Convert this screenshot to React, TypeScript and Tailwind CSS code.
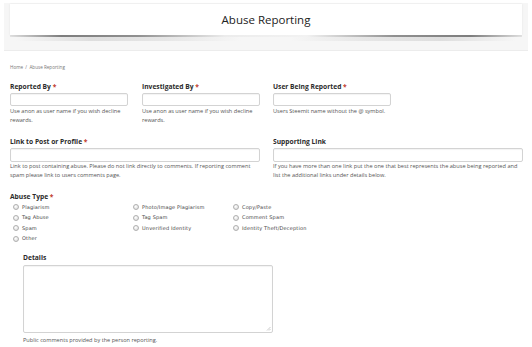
import React from "react";

const Req = () => <span className="text-[#c0392b]"> *</span>;

function Label({ children, req }: { children: React.ReactNode; req?: boolean }) {
  return (
    <div className="h-[10px] text-[6.7px] leading-[10px] font-bold text-[#2b2b2b]">
      {children}
      {req && <Req />}
    </div>
  );
}

function Input({ w, h = 13 }: { w?: string; h?: number }) {
  return (
    <div
      className={`mt-[1px] border border-[#d3d3d3] rounded-[2px] bg-white shadow-[inset_0_1px_1px_rgba(0,0,0,0.05)] ${w ?? "w-full"}`}
      style={{ height: h }}
    />
  );
}

function Help({ children }: { children: React.ReactNode }) {
  return <div className="text-[5.6px] leading-[9px] text-[#555] pt-[0.5px]">{children}</div>;
}

function Radio({ label }: { label: string }) {
  return (
    <div className="flex items-center h-[10.5px]">
      <span className="w-[6px] h-[6px] rounded-full border border-[#b0b0b0] bg-[radial-gradient(circle_at_40%_35%,#ffffff,#d6d6d6)] shrink-0" />
      <span className="ml-[3px] text-[5px] tracking-[0.15px] text-[#444] font-['DejaVu_Sans',sans-serif]">{label}</span>
    </div>
  );
}

export default function App() {
  return (
    <div className="w-[532px] h-[347px] bg-white overflow-hidden font-['Open_Sans',sans-serif]">
      {/* header */}
      <div className="pt-[3px] px-[4px]">
        <div className="h-[48px] bg-[#f6f6f6] pt-[1px] px-[6px] border-b border-[#ececec]">
          <div className="h-[31px] bg-white flex items-center justify-center text-[11.5px] text-[#222] shadow-[0_0_2px_rgba(0,0,0,0.08)]">
            Abuse Reporting
          </div>
          <div className="h-[2px] bg-[linear-gradient(to_right,rgba(0,0,0,0.08)_0%,#7d7d7d_10%,#909090_25%,#ececec_42%,#f2f2f2_58%,#909090_75%,#7d7d7d_90%,rgba(0,0,0,0.08)_100%)]" />
          <div className="h-[4px] bg-[linear-gradient(to_right,transparent_0%,#dedede_15%,#e6e6e6_30%,#f6f6f6_45%,#f6f6f6_55%,#e6e6e6_70%,#dedede_85%,transparent_100%)] mx-[6px]" />
        </div>
      </div>

      <div className="pl-[10px] pr-[9px]">
        {/* breadcrumb */}
        <div className="mt-[12px] h-[8px] text-[4.6px] leading-[8px] text-[#777]">
          Home&nbsp;&nbsp;/&nbsp;&nbsp;Abuse Reporting
        </div>

        {/* row 1 */}
        <div className="mt-[11px] grid grid-cols-[250px_250px] gap-x-[13px]">
          <div className="grid grid-cols-[118px_118px] gap-x-[14px]">
            <div>
              <Label req>Reported By</Label>
              <Input />
              <Help>
                Use anon as user name if you wish decline
                <br />
                rewards.
              </Help>
            </div>
            <div>
              <Label req>Investigated By</Label>
              <Input />
              <Help>
                Use anon as user name if you wish decline
                <br />
                rewards.
              </Help>
            </div>
          </div>
          <div>
            <Label req>User Being Reported</Label>
            <Input w="w-[118px]" />
            <Help>Users Steemit name without the @ symbol.</Help>
          </div>
        </div>

        {/* row 2 */}
        <div className="mt-[12px] grid grid-cols-[250px_250px] gap-x-[13px]">
          <div>
            <Label req>Link to Post or Profile</Label>
            <Input h={14} />
            <Help>
              Link to post containing abuse. Please do not link directly to comments. If reporting comment
              <br />
              spam please link to users comments page.
            </Help>
          </div>
          <div>
            <Label>Supporting Link</Label>
            <Input h={14} />
            <Help>
              If you have more than one link put the one that best represents the abuse being reported and
              <br />
              list the additional links under details below.
            </Help>
          </div>
        </div>

        {/* abuse type */}
        <div className="mt-[12px]">
          <Label req>Abuse Type</Label>
          <div className="pl-[3px] grid grid-cols-[120px_100px_150px]">
            <div>
              <Radio label="Plagiarism" />
              <Radio label="Tag Abuse" />
              <Radio label="Spam" />
              <Radio label="Other" />
            </div>
            <div>
              <Radio label="Photo/Image Plagiarism" />
              <Radio label="Tag Spam" />
              <Radio label="Unverified Identity" />
            </div>
            <div>
              <Radio label="Copy/Paste" />
              <Radio label="Comment Spam" />
              <Radio label="Identity Theft/Deception" />
            </div>
          </div>
        </div>

        {/* details */}
        <div className="mt-[9px] pl-[13px]">
          <Label>Details</Label>
          <div className="relative mt-[2px] w-[250px] h-[68px] border border-[#d3d3d3] rounded-[2px] bg-white shadow-[inset_0_1px_1px_rgba(0,0,0,0.05)]">
            <svg className="absolute right-[1px] bottom-[1px]" width="5" height="5" viewBox="0 0 5 5">
              <path d="M4.5 1 L1 4.5 M4.5 3 L3 4.5" stroke="#aaa" strokeWidth="0.6" />
            </svg>
          </div>
          <div className="mt-[2px]">
            <Help>Public comments provided by the person reporting.</Help>
          </div>
        </div>
      </div>
    </div>
  );
}
